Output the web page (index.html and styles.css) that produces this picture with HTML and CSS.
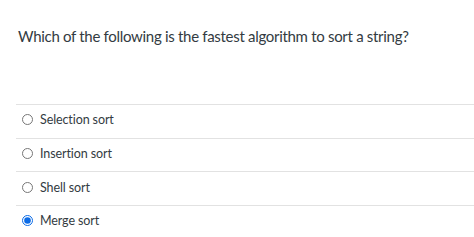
FILE: index.html
```html
<!DOCTYPE html>
<html lang="en">
<head>
    <meta charset="UTF-8">
    <title>Quiz question</title>
    <link rel="stylesheet" href="styles.css">
</head>
<body>
    <div class="question">
        <div class="question-text">Which of the following is the fastest algorithm to sort a string?</div>
        <div class="answers">
            <label class="answer"><input type="radio" name="q1"> Selection sort</label>
            <label class="answer"><input type="radio" name="q1"> Insertion sort</label>
            <label class="answer"><input type="radio" name="q1"> Shell sort</label>
            <label class="answer"><input type="radio" name="q1" checked> Merge sort</label>
        </div>
    </div>
</body>
</html>
```

FILE: styles.css
```css
body {
    margin: 0;
    padding: 0;
    background: #fff;
    font-family: Lato, 'Liberation Sans', sans-serif;
    color: #333b42;
}
.question {
    padding-left: 16px;
}
.question-text {
    font-size: 15px;
    letter-spacing: -0.3px;
    line-height: 20px;
    padding-top: 26px;
    height: 78px;
    padding-left: 2px;
}
.answers {
    display: flex;
    flex-direction: column;
}
.answer {
    display: flex;
    align-items: center;
    gap: 7px;
    height: 29.7px;
    padding-bottom: 3px;
    border-top: 1px solid #e2e2e2;
    font-size: 12.5px;
    letter-spacing: -0.1px;
    padding-left: 6px;
}
.answer input {
    margin: 0;
    width: 11px;
    height: 11px;
    accent-color: #0b6be6;
}
```
